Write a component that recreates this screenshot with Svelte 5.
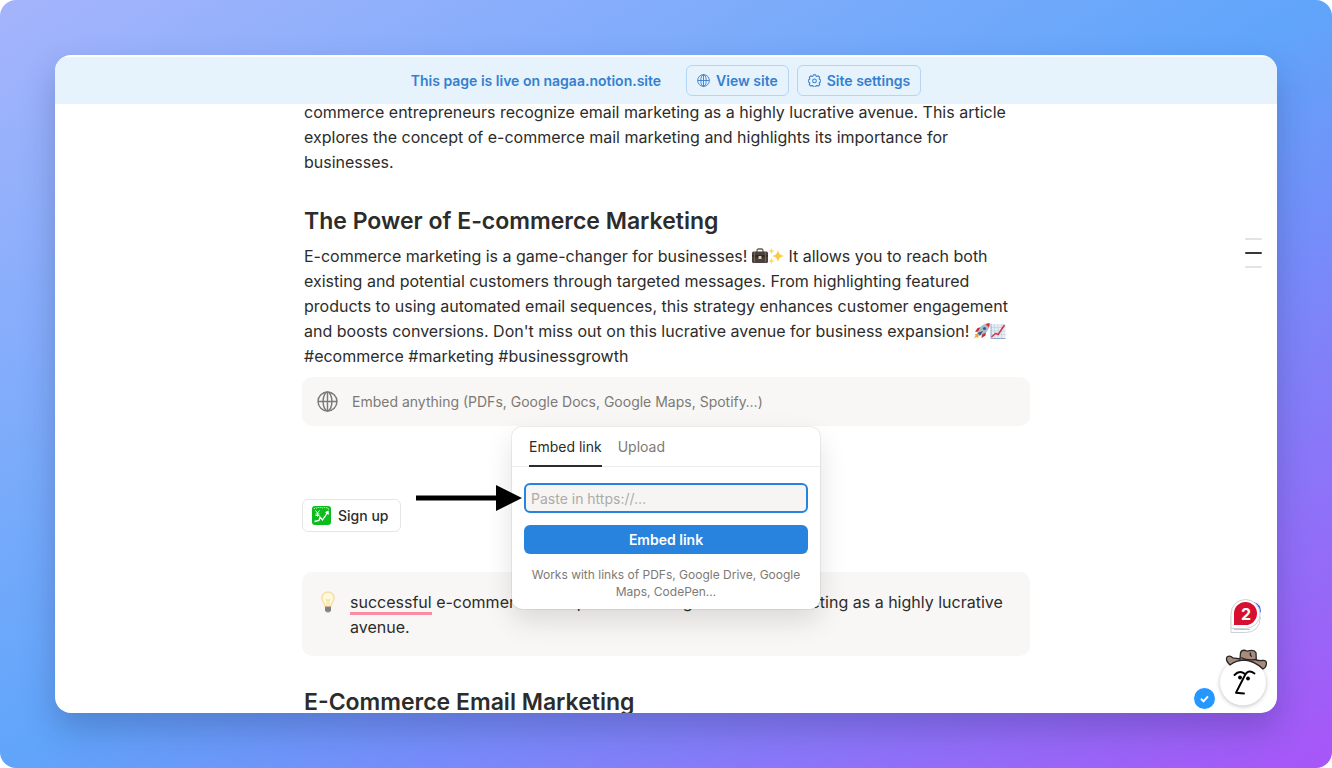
<script lang="ts">
    type Tab = 'link' | 'upload';

    let tab: Tab = $state('link');
    let url = $state('');
</script>

{#snippet globe(size: number)}
    <svg class="icon" width={size} height={size} viewBox="0 0 20 20" fill="none" stroke="currentColor" stroke-width="1.4" aria-hidden="true">
        <circle cx="10" cy="10" r="9" />
        <ellipse cx="10" cy="10" rx="4.2" ry="9" />
        <path d="M10 1v18M1 10h18" />
    </svg>
{/snippet}

<div class="backdrop">
    <div class="window">
        <header class="live-bar">
            <a class="live-text" href="#site">This page is live on nagaa.notion.site</a>
            <div class="live-actions">
                <button class="outline-btn" type="button">
                    {@render globe(13)}
                    View site
                </button>
                <button class="outline-btn" type="button">
                    <svg class="icon" width="13" height="13" viewBox="0 0 20 20" fill="none" stroke="currentColor" stroke-width="1.6" stroke-linejoin="round" aria-hidden="true">
                        <path d="M8.3 1.200h3.400l.6 2 1.500.6 2-1 2.300 2.300-1 2 .6 1.500 1.900.6v3l-1.900.6-.6 1.500 1 2-2.300 2.300-2-1-1.500.6-.6 1.900H8.300l-.6-1.900-1.500-.6-2 1-2.300-2.300 1-2-.6-1.500-1.900-.6v-3l1.900-.6.6-1.500-1-2 2.300-2.300 2 1 1.500-.6z" />
                        <circle cx="10" cy="10.600" r="2.800" />
                    </svg>
                    Site settings
                </button>
            </div>
        </header>

        <main class="page">
            <p class="text intro">
                commerce entrepreneurs recognize email marketing as a highly lucrative avenue. This article<br />
                explores the concept of e-commerce mail marketing and highlights its importance for<br />
                businesses.
            </p>

            <h2>The Power of E-commerce Marketing</h2>
            <p class="text">
                E-commerce marketing is a game-changer for businesses!
                <svg class="emoji" viewBox="0 0 16 16" aria-hidden="true">
                    <path d="M5 4V2.500Q5 1 6.500 1h3Q11 1 11 2.500V4" fill="none" stroke="#6b5850" stroke-width="1.300" />
                    <rect x="0" y="3.500" width="16" height="11.500" rx="1.500" fill="#49413f" />
                    <path d="M0 7h16v1.500L10 10H6L0 8.500z" fill="#302b2a" />
                    <path d="M2.500 4v10.500M13.500 4v10.500" stroke="#785f50" stroke-width="1.200" />
                    <rect x="6.500" y="8" width="3" height="3" rx=".5" fill="#d8c9b0" />
                </svg><svg class="emoji" viewBox="0 0 16 16" aria-hidden="true">
                    <path d="M10 2q.7 5.300 6 6-5.300.7-6 6-.7-5.300-6-6 5.300-.7 6-6z" fill="#fccb3f" />
                    <path d="M3.500 0q.4 2.600 3 3-2.600.4-3 3-.4-2.600-3-3 2.600-.4 3-3zM3.500 10q.4 2.600 3 3-2.600.4-3 3-.4-2.600-3-3 2.600-.4 3-3z" fill="#fdd966" />
                </svg>
                It allows you to reach both<br />
                existing and potential customers through targeted messages. From highlighting featured<br />
                products to using automated email sequences, this strategy enhances customer engagement<br />
                and boosts conversions. Don't miss out on this lucrative avenue for business expansion!
                <svg class="emoji" viewBox="0 0 16 16" aria-hidden="true">
                    <path d="M5 11l-1 4-1.500-1L0 15.500l1.500-3L1 11z" fill="#f8a52b" />
                    <path d="M8 4L3.500 5 1 9l4-.5zM12 8l-.5 4.500L7.500 15 8 11z" fill="#cf2b2d" />
                    <path d="M15.700.3Q10 .3 6.500 4L3 10.500 5.500 13 12 9.500Q15.700 6 15.700.3z" fill="#a9bccb" />
                    <path d="M15.700.3Q13.500.3 11.500 1l3.500 3.500q.7-2 .7-4.200z" fill="#d92d30" />
                    <circle cx="10.500" cy="5.500" r="1.600" fill="#315f91" />
                    <path d="M3.500 10l2.500 2.500L9 8z" fill="#33527e" />
                </svg><svg class="emoji" viewBox="0 0 16 16" aria-hidden="true">
                    <rect x="1" y="1" width="14.500" height="14.500" fill="#e4edf5" />
                    <path d="M1 4.500h14.500M1 8h14.500M1 11.500h14.500M4.500 1v14.500M8 1v14.500M11.500 1v14.500" stroke="#bccddd" stroke-width=".6" />
                    <path d="M1 1v14.500h14.500" fill="none" stroke="#91a9c4" />
                    <path d="M1.500 14l4.200-3.700 2.500 1.200 3.300-5L14.500 2" fill="none" stroke="#d73443" stroke-width="1.500" />
                </svg><br />
                #ecommerce #marketing #businessgrowth
            </p>

            <div class="embed">
                <button class="embed-block" type="button">
                    {@render globe(21)}
                    Embed anything (PDFs, Google Docs, Google Maps, Spotify…)
                </button>

                <div class="popover">
                    <svg class="arrow" width="106" height="26" viewBox="0 0 106 26" aria-hidden="true">
                        <path d="M0 10.500h80V0l26 13-26 13V15.500H0z" />
                    </svg>
                    <div class="tabs">
                        <button class="tab" class:active={tab === 'link'} type="button" onclick={() => (tab = 'link')}>Embed link</button>
                        <button class="tab" class:active={tab === 'upload'} type="button" onclick={() => (tab = 'upload')}>Upload</button>
                    </div>
                    <form class="embed-form" onsubmit={(e) => e.preventDefault()}>
                        <input type="url" aria-label="Embed link" placeholder="Paste in https://…" bind:value={url} />
                        <button class="submit" type="submit">Embed link</button>
                        <p class="hint">Works with links of PDFs, Google Drive, Google Maps, CodePen…</p>
                    </form>
                </div>
            </div>

            <button class="signup" type="button">
                <svg width="19" height="19" viewBox="0 0 19 19" fill="none" aria-hidden="true">
                    <rect width="19" height="19" rx="3" fill="#0cbc1d" />
                    <path d="M2 3q1-2 2.500-.8Q6 .8 7.500 2 9 .8 10.500 2 12 .8 13.500 2q2.500-1 3 1.500" stroke="#d7ffd9" stroke-width="1" stroke-dasharray="1.500 .7" />
                    <path d="M3.500 4.500L5.500 7l2-2.500M5.500 7v3.500M3.500 8h4M3.500 9.500h4" stroke="#fff" stroke-width="1" />
                    <path d="M2.500 15.500l4.500-1 1-3.500 2.500 3 2.500-3.500 3-5M13.500 6.500l2.500-1 .3 3" stroke="#fff" stroke-width="1.300" />
                </svg>
                Sign up
            </button>

            <aside class="callout">
                <svg class="bulb" width="16" height="24" viewBox="0 0 16 24" aria-hidden="true">
                    <path d="M8 2a6 6 0 0 0-6 6.200c0 3.300 2.700 4.600 3 8.300h6c.3-3.700 3-5 3-8.300A6 6 0 0 0 8 2z" fill="#fff8dc" stroke="#f9dfa3" stroke-width="1.500" />
                    <path d="M5.500 9l1.500 2 1-2 1 2 1.500-2M7 11v5M9 11v5" fill="none" stroke="#f8d68d" stroke-width=".7" />
                    <path d="M5 16.500h6v4l-1.500 2h-3L5 20.500z" fill="#989898" />
                    <path d="M5 18h6M5 20h6" stroke="#5d5d5d" stroke-width=".8" />
                </svg>
                <p class="text">
                    <span class="misspelled">successful</span> e-commerce entrepreneurs recognize email marketing as a highly lucrative<br />
                    avenue.
                </p>
            </aside>

            <h2>E-Commerce Email Marketing</h2>
        </main>

        <nav class="outline" aria-label="Outline">
            <span></span>
            <span class="current"></span>
            <span></span>
        </nav>

        <div class="widgets">
            <svg class="status" width="21" height="21" viewBox="0 0 21 21" aria-hidden="true">
                <circle cx="10.500" cy="10.500" r="10.500" fill="#2597ff" />
                <path d="M7 10.800l2.500 2.500 4.500-5" fill="none" stroke="#fff" stroke-width="2" />
            </svg>
            <div class="stack">
                <div class="badge">
                    <svg width="34" height="36" viewBox="0 0 34 36" aria-hidden="true">
                        <path d="M25 4q7 2 7 10l-4 2z" fill="#4a66e0" />
                        <path d="M2 19h29.500q-1 15.500-15 15.500H2z" fill="#fff" stroke="#ccd2da" />
                        <path d="M2 16A14.500 14.500 0 1 1 16.500 30.500H2z" fill="#fff" stroke="#ccd2da" />
                        <path d="M5.500 31.500h15" stroke="#dd6574" stroke-dasharray="1 1" />
                        <path d="M5 15.500A11.500 11.500 0 1 1 16.500 27H5z" fill="#d8102f" />
                    </svg>
                    <span>2</span>
                </div>
                <button class="assistant" type="button" aria-label="Assistant">
                    <svg width="48" height="58" viewBox="3 1 48 58" aria-hidden="true">
                        <circle class="face" cx="27" cy="35.500" r="23" fill="#fff" />
                        <path d="M14 18Q9 13 11 10q3-2 6 1l7 1 .5-6q1-3.500 5-2.500 2 1 4 .2 5-1.200 6.500 2l.3 7.300q4 1 6 .5 5-.5 4 4-.3 3-3.300 4.500Q38 13.500 28 13q-8 .2-14 5z" fill="#a78b7c" stroke="#2b2727" stroke-width="1.300" />
                        <path d="M24.500 10.500q8 3.500 15.500 2M34.500 5.500q-1 3 1.500 4" fill="none" stroke="#2b2727" stroke-width="1.300" />
                        <path d="M18.500 28q5-5.500 10.500-1M38.500 26.500Q32 21.500 28.500 29L20 45.800l8 .7" fill="none" stroke="#000" stroke-width="1.900" stroke-linecap="round" stroke-linejoin="round" />
                        <circle cx="24" cy="30.500" r="1.900" />
                        <circle cx="32" cy="31.500" r="1.900" />
                    </svg>
                </button>
            </div>
        </div>
    </div>
</div>

<style>
    :global(body) {
        margin: 0;
        background: #fff;
    }

    .backdrop {
        box-sizing: border-box;
        height: 100vh;
        padding: 55px;
        border-radius: 16px;
        background: linear-gradient(to bottom right, #a5b4fc, #60a5fa, #a855f7);
        font-family: Inter, 'Liberation Sans', sans-serif;
        color: #2c2c2b;
    }

    .window {
        box-sizing: border-box;
        position: relative;
        height: 100%;
        padding-top: 2px;
        overflow: hidden;
        border-radius: 16px;
        background: #fff;
        box-shadow: 0 16px 32px rgba(30, 30, 90, 0.25);
    }

    button {
        font: inherit;
        cursor: pointer;
    }

    p,
    h2 {
        margin: 0;
    }

    .live-bar {
        position: relative;
        z-index: 1;
        display: flex;
        align-items: center;
        justify-content: center;
        gap: 25px;
        height: 47px;
        background: #e6f2fc;
        color: #3480d0;
        font-size: 14px;
        font-weight: 600;
    }

    .live-text {
        color: inherit;
        text-decoration: none;
    }

    .live-actions {
        display: flex;
        gap: 8px;
    }

    .outline-btn {
        display: flex;
        align-items: center;
        gap: 6px;
        height: 31px;
        padding: 0 10px;
        border: 1px solid #b5d5f4;
        border-radius: 6px;
        background: transparent;
        color: inherit;
    }

    .icon {
        flex: none;
    }

    .page {
        width: 728px;
        max-width: 100%;
        margin: 0 auto;
    }

    .text {
        padding: 0 2px;
        font-size: 16px;
        line-height: 25px;
        white-space: nowrap;
    }

    /* first lines are scrolled under the bar */
    .intro {
        margin-top: -4px;
    }

    h2 {
        padding: 30px 2px 7px;
        font-size: 23px;
        font-weight: 600;
        line-height: 32px;
    }

    .emoji {
        width: 16px;
        height: 16px;
        vertical-align: -2px;
    }

    .embed {
        position: relative;
        margin-top: 8px;
    }

    .embed-block {
        display: flex;
        align-items: center;
        gap: 14px;
        width: 100%;
        height: 49px;
        padding: 0 15px;
        border: 0;
        border-radius: 10px;
        background: #f8f7f6;
        color: #7d7a75;
        font-size: 14px;
    }

    .popover {
        position: absolute;
        z-index: 2;
        top: 100%;
        left: 50%;
        width: 308px;
        margin-top: 1px;
        transform: translateX(-50%);
        border-radius: 10px;
        background: #fff;
        box-shadow:
            0 0 0 1px rgba(0, 0, 0, 0.06),
            0 12px 28px rgba(0, 0, 0, 0.12);
    }

    .arrow {
        position: absolute;
        top: 58px;
        right: 298px;
    }

    .tabs {
        display: flex;
        gap: 16px;
        height: 39px;
        padding: 0 17px;
        border-bottom: 1px solid #ececeb;
    }

    .tab {
        height: 40px;
        padding: 0;
        border: 0;
        border-bottom: 2px solid transparent;
        background: none;
        color: #7d7a75;
        font-size: 14px;
    }

    .tab.active {
        border-color: #2c2c2b;
        color: #2c2c2b;
    }

    .embed-form {
        display: flex;
        flex-direction: column;
        padding: 16px 12px 9px;
    }

    input {
        box-sizing: border-box;
        width: 100%;
        height: 30px;
        padding: 0 5px;
        border: 2px solid #2783de;
        border-radius: 6px;
        outline: 0;
        background: #f6f5f4;
        font: inherit;
        font-size: 14px;
    }

    input::placeholder {
        color: #adaba8;
    }

    .submit {
        height: 29px;
        margin-top: 12px;
        border: 0;
        border-radius: 6px;
        background: #2783de;
        color: #fff;
        font-size: 14px;
        font-weight: 600;
    }

    .hint {
        margin-top: 12px;
        color: #7d7a75;
        font-size: 12px;
        line-height: 17px;
        text-align: center;
    }

    .signup {
        display: flex;
        align-items: center;
        gap: 7px;
        height: 33px;
        margin: 73px 0 40px;
        padding: 0 12px 0 9px;
        border: 1px solid #e6e6e5;
        border-radius: 6px;
        background: #fff;
        color: #2c2c2b;
        font-size: 14px;
        font-weight: 500;
    }

    .callout {
        display: flex;
        align-items: flex-start;
        gap: 14px;
        padding: 18px 18px 16px;
        border-radius: 10px;
        background: #f8f7f6;
    }

    .callout .text {
        padding: 0;
    }

    .bulb {
        flex: none;
    }

    .misspelled {
        border-bottom: 3px solid #fb8ca2;
    }

    .outline {
        position: absolute;
        top: 183px;
        right: 15px;
        display: grid;
        gap: 12px;
    }

    .outline span {
        width: 17px;
        height: 2px;
        border-radius: 1px;
        background: #e3e3e2;
    }

    .outline .current {
        background: #373735;
    }

    .widgets {
        position: absolute;
        right: 10px;
        bottom: 4px;
        display: flex;
        align-items: flex-end;
        gap: 4px;
    }

    .stack {
        display: flex;
        flex-direction: column;
        align-items: flex-end;
        gap: 14px;
        padding-bottom: 3px;
    }

    .badge {
        display: grid;
        place-items: center;
        margin-right: 4px;
        color: #fff;
        font-size: 16px;
        font-weight: 700;
    }

    .badge svg,
    .badge span {
        grid-area: 1 / 1;
    }

    .badge span {
        padding-bottom: 4px;
    }

    .assistant {
        display: flex;
        padding: 0;
        border: 0;
        background: none;
    }

    .assistant svg {
        overflow: visible;
    }

    .face {
        filter: drop-shadow(0 1px 2px rgba(0, 0, 0, 0.25));
    }
</style>
